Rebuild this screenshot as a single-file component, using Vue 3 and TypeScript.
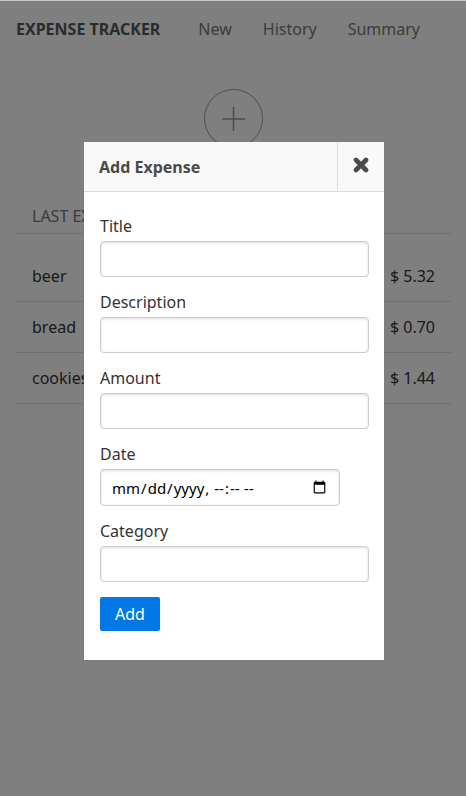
<script setup lang="ts">
import { ref } from 'vue'

interface Expense {
  title: string
  amount: number
}

interface Field {
  id: string
  label: string
  type: string
}

const links: string[] = ['New', 'History', 'Summary']

const expenses: Expense[] = [
  { title: 'beer', amount: 5.32 },
  { title: 'bread', amount: 0.7 },
  { title: 'cookies', amount: 1.44 },
]

const fields: Field[] = [
  { id: 'title', label: 'Title', type: 'text' },
  { id: 'description', label: 'Description', type: 'text' },
  { id: 'amount', label: 'Amount', type: 'text' },
  { id: 'date', label: 'Date', type: 'datetime-local' },
  { id: 'category', label: 'Category', type: 'text' },
]

const open = ref(true)
</script>

<template>
  <div class="page">
    <nav class="nav">
      <a class="brand" href="#">EXPENSE TRACKER</a>
      <a v-for="link in links" :key="link" href="#">{{ link }}</a>
    </nav>

    <main class="content">
      <button class="add" type="button" aria-label="Add expense" @click="open = true">
        <svg viewBox="0 0 59 59" width="59" height="59" aria-hidden="true">
          <circle cx="29.5" cy="29.5" r="29" />
          <path d="M18.5 30H41M29.5 18v24" stroke-width="1.5" />
        </svg>
      </button>

      <h2 class="heading">LAST EXPENSES</h2>
      <table class="expenses">
        <tbody>
          <tr v-for="item in expenses" :key="item.title">
            <td>{{ item.title }}</td>
            <td class="amount">$ {{ item.amount.toFixed(2) }}</td>
          </tr>
        </tbody>
      </table>
    </main>
  </div>

  <div v-if="open" class="overlay">
    <section class="dialog" role="dialog" aria-modal="true" aria-labelledby="dialog-title">
      <header class="dialog-header">
        <h1 id="dialog-title" class="dialog-title">Add Expense</h1>
        <button class="close" type="button" aria-label="Close" @click="open = false">
          <svg viewBox="0 0 16 16" width="16" height="16" aria-hidden="true">
            <path d="M3 3l10 10M13 3L3 13" />
          </svg>
        </button>
      </header>
      <form class="form" @submit.prevent="open = false">
        <div v-for="field in fields" :key="field.id" class="field">
          <label :for="field.id">{{ field.label }}</label>
          <input :id="field.id" :type="field.type" :class="{ date: field.id === 'date' }" />
        </div>
        <button class="submit" type="submit">Add</button>
      </form>
    </section>
  </div>
</template>

<style>
body {
  margin: 0;
  background: #fff;
}
</style>

<style scoped>
.page,
.overlay {
  font-family: 'Noto Sans', 'Open Sans', sans-serif;
  font-size: 16px;
  line-height: 20px;
  box-sizing: border-box;
}

.page {
  min-height: 100vh;
}

.nav {
  display: flex;
  gap: 31px;
  padding: 19px 16px;
}

.nav a {
  color: #777;
  text-decoration: none;
}

.nav .brand {
  margin-right: 7px;
  color: #505860;
  font-weight: 700;
}

.content {
  display: flex;
  flex-direction: column;
  padding: 31px 15px 0 16px;
}

.add {
  align-self: center;
  display: flex;
  padding: 0;
  border: 0;
  background: none;
}

.add svg {
  fill: none;
  stroke: #999;
  stroke-width: 1;
}

.heading {
  margin: 50px 0 17px;
  padding: 8px 16px 7px;
  border-bottom: 1px solid #e0e0e0;
  color: #707478;
  font-size: 16px;
  font-weight: 400;
}

.expenses {
  width: 100%;
  border-collapse: separate;
  border-spacing: 0;
  color: #333;
}

.expenses td {
  padding: 15px 16px;
  border-bottom: 1px solid #e0e0e0;
}

.expenses .amount {
  text-align: right;
}

.overlay {
  position: fixed;
  inset: 0;
  display: flex;
  justify-content: center;
  align-items: flex-start;
  padding: 141px 0 16px 2px;
  border-top: 1px solid #c8cac9;
  background: rgba(0, 0, 0, 0.5);
  background-clip: padding-box;
  overflow: auto;
}

.dialog {
  width: 300px;
  background: #fff;
}

.dialog-header {
  display: flex;
  border-bottom: 1px solid #ddd;
  background: #f9f9f9;
  color: #4a4a4a;
}

.dialog-title {
  flex: 1;
  margin: 0;
  padding: 15px 15px 14px;
  font-size: 16px;
  font-weight: 700;
}

.close {
  width: 47px;
  padding: 0 0 4px;
  border: 0;
  border-left: 1px solid #ddd;
  background: none;
  line-height: 0;
}

.close svg {
  fill: none;
  stroke: #4a4a4a;
  stroke-width: 4.6;
  stroke-linecap: round;
}

.form {
  display: flex;
  flex-direction: column;
  gap: 15px;
  padding: 24px 15px 29px 16px;
}

.field {
  display: flex;
  flex-direction: column;
  gap: 5px;
  color: #333;
}

.field input {
  box-sizing: border-box;
  width: 100%;
  height: 36px;
  margin: 0;
  padding: 0 10px;
  border: 1px solid #ccc;
  border-radius: 4px;
  background: #fff;
  box-shadow: inset 0 1px 3px #ddd;
  color: #000;
  font: inherit;
}

.field .date {
  width: 240px;
  height: 37px;
  font-size: 15px;
}

.submit {
  align-self: flex-start;
  padding: 7px 15px;
  border: 0;
  border-radius: 2px;
  background: #0078e7;
  color: #fff;
  font: inherit;
}
</style>
